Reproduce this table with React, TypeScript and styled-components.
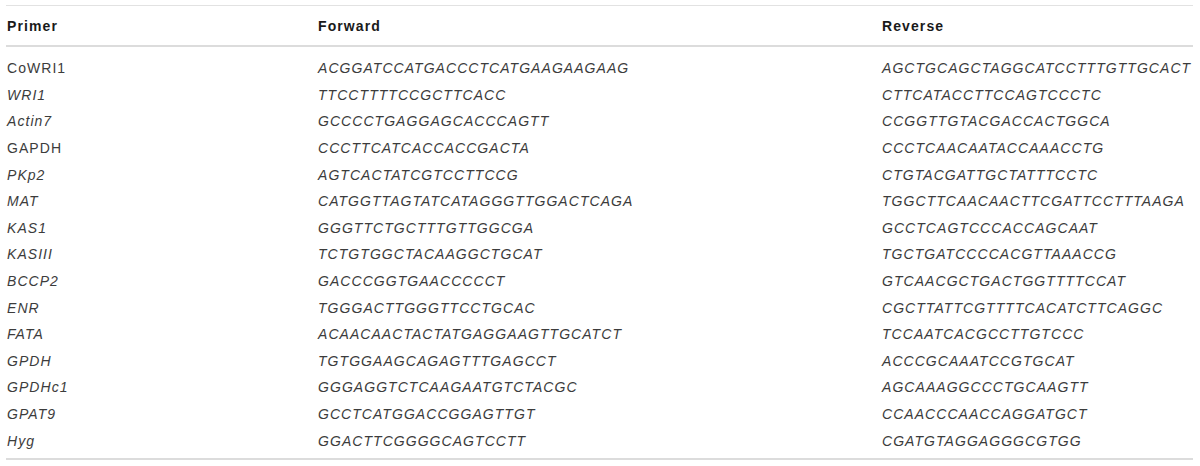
import React from "react";
import styled, { createGlobalStyle } from "styled-components";

const Global = createGlobalStyle`
  html, body { margin: 0; padding: 0; background: #ffffff; }
  body { font-family: "Liberation Sans", Arial, Helvetica, sans-serif; }
`;

const Page = styled.div`
  padding-top: 5px;
  padding-left: 6px;
  width: 1187px;
`;

const Table = styled.div`
  border-top: 1px solid #e2e2e2;
  border-bottom: 2px solid #dcdcdc;
  padding-bottom: 4px;
`;

const Row = styled.div<{ $head?: boolean }>`
  display: grid;
  grid-template-columns: 311px 564px 1fr;
  padding-left: 1px;
  height: ${(p) => (p.$head ? "39px" : "26.6px")};
  align-items: center;
  border-bottom: ${(p) => (p.$head ? "2px solid #dcdcdc" : "none")};
  margin-bottom: ${(p) => (p.$head ? "8px" : "0")};
`;

const HeadCell = styled.div`
  font-size: 14px;
  font-weight: 700;
  letter-spacing: 1.1px;
  color: #1a1a1a;
  line-height: 16px;
`;

const Cell = styled.div<{ $italic?: boolean }>`
  font-size: 14px;
  letter-spacing: 1.05px;
  color: #3c3c3c;
  line-height: 16px;
  font-style: ${(p) => (p.$italic ? "italic" : "normal")};
  white-space: nowrap;
`;

type Primer = { name: string; italic: boolean; fwd: string; rev: string };

const rows: Primer[] = [
  { name: "CoWRI1", italic: false, fwd: "ACGGATCCATGACCCTCATGAAGAAGAAG", rev: "AGCTGCAGCTAGGCATCCTTTGTTGCACT" },
  { name: "WRI1", italic: true, fwd: "TTCCTTTTCCGCTTCACC", rev: "CTTCATACCTTCCAGTCCCTC" },
  { name: "Actin7", italic: true, fwd: "GCCCCTGAGGAGCACCCAGTT", rev: "CCGGTTGTACGACCACTGGCA" },
  { name: "GAPDH", italic: false, fwd: "CCCTTCATCACCACCGACTA", rev: "CCCTCAACAATACCAAACCTG" },
  { name: "PKp2", italic: true, fwd: "AGTCACTATCGTCCTTCCG", rev: "CTGTACGATTGCTATTTCCTC" },
  { name: "MAT", italic: true, fwd: "CATGGTTAGTATCATAGGGTTGGACTCAGA", rev: "TGGCTTCAACAACTTCGATTCCTTTAAGA" },
  { name: "KAS1", italic: true, fwd: "GGGTTCTGCTTTGTTGGCGA", rev: "GCCTCAGTCCCACCAGCAAT" },
  { name: "KASIII", italic: true, fwd: "TCTGTGGCTACAAGGCTGCAT", rev: "TGCTGATCCCCACGTTAAACCG" },
  { name: "BCCP2", italic: true, fwd: "GACCCGGTGAACCCCCT", rev: "GTCAACGCTGACTGGTTTTCCAT" },
  { name: "ENR", italic: true, fwd: "TGGGACTTGGGTTCCTGCAC", rev: "CGCTTATTCGTTTTCACATCTTCAGGC" },
  { name: "FATA", italic: true, fwd: "ACAACAACTACTATGAGGAAGTTGCATCT", rev: "TCCAATCACGCCTTGTCCC" },
  { name: "GPDH", italic: true, fwd: "TGTGGAAGCAGAGTTTGAGCCT", rev: "ACCCGCAAATCCGTGCAT" },
  { name: "GPDHc1", italic: true, fwd: "GGGAGGTCTCAAGAATGTCTACGC", rev: "AGCAAAGGCCCTGCAAGTT" },
  { name: "GPAT9", italic: true, fwd: "GCCTCATGGACCGGAGTTGT", rev: "CCAACCCAACCAGGATGCT" },
  { name: "Hyg", italic: true, fwd: "GGACTTCGGGGCAGTCCTT", rev: "CGATGTAGGAGGGCGTGG" },
];

export default function App() {
  return (
    <Page>
      <Global />
      <Table>
        <Row $head>
          <HeadCell>Primer</HeadCell>
          <HeadCell>Forward</HeadCell>
          <HeadCell>Reverse</HeadCell>
        </Row>
        {rows.map((r) => (
          <Row key={r.name}>
            <Cell $italic={r.italic}>{r.name}</Cell>
            <Cell $italic>{r.fwd}</Cell>
            <Cell $italic>{r.rev}</Cell>
          </Row>
        ))}
      </Table>
    </Page>
  );
}
